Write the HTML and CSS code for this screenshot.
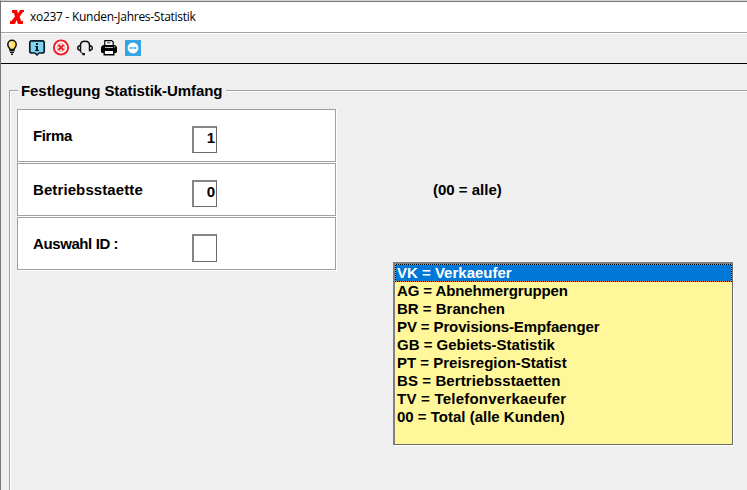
FILE: index.html
```html
<!DOCTYPE html>
<html lang="de">
<head>
<meta charset="utf-8">
<title>xo237 - Kunden-Jahres-Statistik</title>
<link rel="stylesheet" href="styles.css">
</head>
<body>
<div class="window">
  <header class="titlebar">
    <svg class="app-icon" width="14" height="14" viewBox="0 0 14 14"><path fill="#f00" d="M2 0h5l1 3.500L10 0h4v2h-1L9.800 6.500 11 11h2v3H8L6.500 10 5 14H0v-3h1.500L5 6.500 3.800 3H2z"/></svg>
    <span class="caption">xo237 - Kunden-Jahres-Statistik</span>
  </header>
  <nav class="toolbar">
    <svg class="bulb" width="16" height="16" viewBox="0 0 16 16"><path fill="#ffe45c" stroke="#111" stroke-width="1.500" d="M6 9.500C6 8 3.800 7.500 3.800 4.500A4.200 4.200 0 0 1 12.200 4.500C12.200 7.500 10 8 10 9.500z"/><path fill="#111" d="M5.500 9.500h5v2h-5zM6 12h4v1H6zM7 13.500h2V15H7z"/><path fill="#fff" d="M6 3h1v3H6z"/></svg>
    <svg width="16" height="16" viewBox="0 0 16 16"><path fill="#81d4ef" stroke="#071c26" stroke-width="1.700" stroke-linejoin="round" d="M2 .8h12l1.200 1.200v10L14 13h-4l-2 2-2-2H2L.8 12V2z"/><path fill="#071c26" d="M7 3h2v2H7zM6 6h3v4h1v1H6v-1h1V7H6z"/></svg>
    <svg width="16" height="16" viewBox="0 0 16 16"><circle cx="8" cy="7.500" r="7.100" fill="#fff" stroke="#ed1c24" stroke-width="1.900"/><path d="M5.500 5l5 5m0-5l-5 5" stroke="#ed1c24" stroke-width="2"/><circle cx="8" cy="7.500" r="4" fill="none" stroke="#ed1c24" stroke-width=".5"/></svg>
    <svg width="16" height="16" viewBox="0 0 16 16" fill="none" stroke="#111" stroke-width="1.500"><path d="M3.500 10.500V5Q3.500 1.200 8 1.200T12.500 5v5.500M3.500 5.500H2.700L.8 7v2l1.900 1.500h1.500M12.500 5.500h.8L15.200 7v2l-1.900 1.500h-1.500"/><path fill="#111" stroke="none" d="M3 10.500h1.200v1.500l1.500 1H8v2.300H5.300V14L3 12z"/></svg>
    <svg width="16" height="16" viewBox="0 0 16 16"><path fill="#fff" stroke="#000" stroke-width="1.200" d="M3.800 5.500V.6h6.900l1.500 1.500v3.400"/><path fill="#000" d="M2 5h12l2 2v5l-1 1h-2v-2H3v2H1l-1-1V7zM6 2.500h3.500v.8H6z"/><path fill="#fff" d="M4 7h8v.8H4zM13.200 6.500h1v1h-1z"/><path fill="#fff" stroke="#000" stroke-width="1.400" d="M3.200 10.200h9.600v4.600H3.200z"/></svg>
    <svg width="16" height="16" viewBox="0 0 16 16"><path fill="#35a3e4" d="M0 0h16v16H0z"/><circle cx="8" cy="8" r="5.400" fill="#fff"/><path fill="#35a3e4" d="M4.200 8l2-1.500v1h3.600v-1l2 1.500-2 1.500v-1H6.200v1z"/></svg>
  </nav>
  <main class="content">
    <section class="group">
      <div class="group-head"><h1>Festlegung Statistik-Umfang</h1></div>
      <div class="group-body">
        <form class="fields">
          <div class="row"><span class="label tight">Firma</span><span class="box">1</span></div>
          <div class="row"><span class="label wide">Betriebsstaette</span><span class="box">0</span></div>
          <div class="row"><span class="label tight">Auswahl ID :</span><span class="box tall"></span></div>
        </form>
        <aside class="side">
          <p class="hint">(00 = alle)</p>
          <ul class="list">
            <li class="selected">VK = Verkaeufer</li>
            <li class="narrow">AG = Abnehmergruppen</li>
            <li>BR = Branchen</li>
            <li class="narrow">PV = Provisions-Empfaenger</li>
            <li>GB = Gebiets-Statistik</li>
            <li>PT = Preisregion-Statist</li>
            <li class="wide">BS = Bertriebsstaetten</li>
            <li class="wider">TV = Telefonverkaeufer</li>
            <li>00 = Total (alle Kunden)</li>
          </ul>
        </aside>
      </div>
    </section>
  </main>
</div>
</body>
</html>
```
FILE: styles.css
```css
* { box-sizing: border-box; }
body { margin: 0; background: #efefef; overflow: hidden; }
.window {
  height: 490px;
  display: flex;
  flex-direction: column;
  border-left: 1px solid #777;
  border-top: 1px solid #d0d0d0;
  color: #000;
  font: bold 15px/18px "Liberation Sans", Arial, sans-serif;
}
.titlebar {
  height: 32px;
  display: flex;
  align-items: center;
  gap: 6px;
  padding: 0 0 1px 9px;
  background: #fff;
  border-top: 1px solid #777;
  border-bottom: 1px solid #a0a0a0;
}
.caption { font: 12px/16px "Open Sans", sans-serif; letter-spacing: -0.28px; white-space: nowrap; }
.toolbar {
  height: 31px;
  display: flex;
  gap: 8px;
  padding: 6px 0 0 4px;
  border-top: 1px solid #fff;
  border-bottom: 1px solid #000;
}
.toolbar svg { flex: none; overflow: visible; }
.toolbar .bulb { margin: 0 1px 0 -1px; }
.content { flex: 1; padding: 18px 0 0 8px; }
.group { height: 100%; display: flex; flex-direction: column; }
.group-head { display: flex; align-items: flex-end; height: 18px; }
.group-head::before, .group-head::after {
  content: "";
  height: 9px;
  border-top: 1px solid #a0a0a0;
  box-shadow: inset 0 1px #fff;
}
.group-head::before { width: 8px; border-left: 1px solid #a0a0a0; box-shadow: inset 1px 1px #fff; }
.group-head::after { flex: 1; margin-left: 4px; }
h1 { margin: 0 0 0 3px; font: inherit; letter-spacing: -0.07px; white-space: nowrap; }
.group-body {
  flex: 1;
  display: flex;
  align-items: flex-start;
  padding: 9px 0 0 7px;
  border-left: 1px solid #a0a0a0;
  box-shadow: inset 1px 0 #fff;
}
.fields { width: 319px; display: flex; flex-direction: column; gap: 1px; }
.row {
  height: 53px;
  display: flex;
  padding: 16px 0 0 15px;
  background: #fff;
  border: 1px solid #a0a0a0;
  box-shadow: 1px 1px #fff;
}
.label { width: 159px; padding-top: 1px; white-space: nowrap; }
.box {
  width: 25px;
  height: 27px;
  padding: 1px 1px 0 0;
  text-align: right;
  background: #fff;
  border: 1px solid #696969;
  border-width: 2px 1px 1px 2px;
  border-top-color: #858585;
  border-left-color: #858585;
}
.tall { height: 28px; }
.side { margin-left: 57px; padding-top: 72px; }
.hint { margin: 0 0 63px 40px; }
.list {
  width: 340px;
  height: 183px;
  margin: 0;
  padding: 0;
  list-style: none;
  background: #fff799;
  border: 1px solid #696969;
  border-width: 2px 1px 1px 2px;
  border-top-color: #808080;
  border-left-color: #808080;
  box-shadow: 1px 1px #fff;
}
.list li { height: 18px; padding-left: 2px; white-space: nowrap; }
.list .selected {
  padding: 1px 1px 1px 2px;
  line-height: 16px;
  color: #fff;
  /* focus rectangle: alternating black and orange pixels round the blue row */
  background:
    linear-gradient(#0078d7, #0078d7) 1px 1px / calc(100% - 2px) calc(100% - 2px) no-repeat,
    repeating-conic-gradient(#000 0 25%, #ff8728 0 50%) 0 0 / 2px 2px;
}
.tight { letter-spacing: -0.4px; }
.narrow { letter-spacing: -0.12px; }
.wide { letter-spacing: 0.1px; }
.wider { letter-spacing: 0.23px; }
```
